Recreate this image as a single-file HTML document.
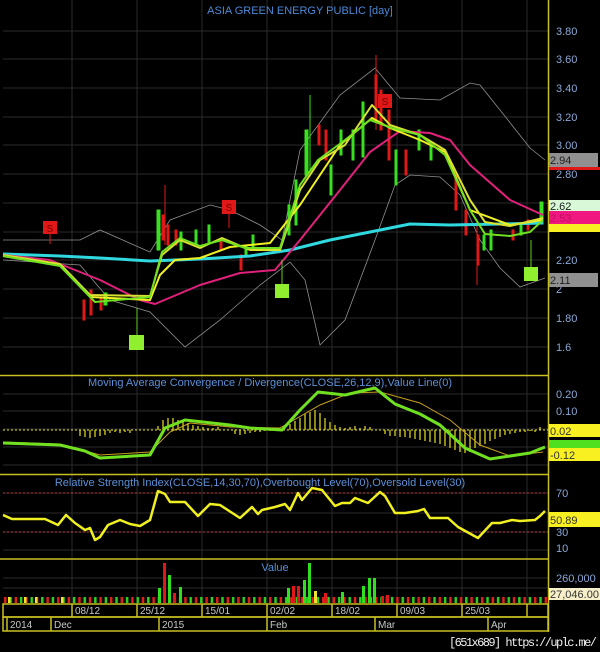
<!DOCTYPE html>
<html><head><meta charset="utf-8"><style>
html,body{margin:0;padding:0;background:#000;width:600px;height:652px;overflow:hidden}
svg{display:block}
text{font-family:"Liberation Sans",sans-serif}
text.wm{font-family:"Liberation Mono",monospace}
</style></head><body>
<svg width="600" height="652" viewBox="0 0 600 652" xmlns="http://www.w3.org/2000/svg">
<defs>
<pattern id="vb" x="3" y="595" width="10.6" height="8" patternUnits="userSpaceOnUse">
<rect x="1" y="2" width="2.5" height="6" fill="#e0201a"/><rect x="6.3" y="2" width="2.5" height="6" fill="#30d020"/>
</pattern>
</defs>
<rect width="600" height="652" fill="#000"/>
<g stroke="#2a2a2a" stroke-width="1">
<path d="M3 31H548M3 59H548M3 88H548M3 117H548M3 145H548M3 174H548M3 203H548M3 232H548M3 260H548M3 289H548M3 318H548M3 347H548"/>
<path d="M3 394H548M3 411H548M3 429H548M3 447H548M3 465H548M3 493H548M3 513H548M3 532H548M3 550H548M3 578H548M3 588H548"/>
<path d="M72 0V603M137 0V603M202 0V603M267 0V603M332 0V603M397 0V603M462 0V603M527 0V603"/>
</g>
<g stroke="#c8c020" stroke-width="1.5" fill="none">
<path d="M548.5 0V632"/>
<path d="M0 375.5H548M0 474.5H548M0 559H548"/>
<rect x="3" y="604" width="545" height="13"/>
<rect x="3" y="617" width="545" height="14"/>
<path d="M72 604V617M137 604V617M202 604V617M267 604V617M332 604V617M397 604V617M462 604V617M527 604V617"/>
<path d="M7 617V631M51 617V631M159 617V631M267 617V631M375 617V631M488 617V631"/>
</g>
<text x="300" y="14" fill="#4a8ad8" font-size="11" text-anchor="middle">ASIA GREEN ENERGY PUBLIC [day]</text>
<g fill="#8aa8d8" font-size="11">
<text x="556" y="35">3.80</text><text x="556" y="63">3.60</text><text x="556" y="92">3.40</text>
<text x="556" y="121">3.20</text><text x="556" y="149">3.00</text><text x="556" y="178">2.80</text>
<text x="556" y="264">2.20</text><text x="556" y="293">2</text><text x="556" y="322">1.80</text><text x="556" y="351">1.6</text>
<text x="556" y="398">0.20</text><text x="556" y="415">0.10</text>
<text x="556" y="497">70</text><text x="556" y="536">30</text><text x="556" y="552">10</text>
<text x="556" y="582">260,000</text>
</g>
<g fill="none" stroke="#909090" stroke-width="0.8">
<polyline points="3,240 80,240 100,230 150,252 170,220 210,205 230,210 260,225 282,240 300,150 340,95 375,68 400,98 440,100 470,83 480,85 500,110 530,148 545,160"/>
<polyline points="3,260 80,265 110,300 150,312 185,347 220,320 260,285 290,262 305,280 320,345 345,320 375,240 395,185 410,175 440,177 460,195 480,240 500,268 520,287 545,278"/>
</g>
<g stroke-width="1">
<g fill="#e01818" stroke="#e01818">
<rect x="83" y="300" width="2" height="20"/><rect x="90" y="290" width="2" height="25"/><rect x="100" y="298" width="2" height="12"/>
<rect x="162" y="215" width="3" height="25"/><rect x="167" y="225" width="2" height="20"/><rect x="175" y="230" width="2" height="15"/><line x1="165" y1="185" x2="165" y2="245"/>
<rect x="220" y="240" width="2" height="10"/><rect x="240" y="255" width="2" height="15"/><rect x="318" y="125" width="2" height="20"/><rect x="325" y="130" width="2" height="30"/>
<rect x="375" y="75" width="2" height="45"/><rect x="380" y="90" width="2" height="40"/><rect x="388" y="110" width="2" height="50"/><line x1="376" y1="55" x2="376" y2="130"/>
<rect x="405" y="150" width="2" height="25"/><rect x="455" y="175" width="2" height="35"/><rect x="465" y="210" width="2" height="25"/><rect x="477" y="235" width="2" height="30"/><line x1="477" y1="220" x2="477" y2="285"/>
<rect x="512" y="230" width="2" height="10"/><rect x="527" y="220" width="2" height="10"/>
</g>
<g fill="#38e020" stroke="#38e020">
<rect x="104" y="293" width="3" height="12"/><rect x="157" y="210" width="3" height="40"/><rect x="180" y="232" width="2" height="18"/><rect x="195" y="230" width="2" height="14"/>
<rect x="208" y="225" width="2" height="18"/><rect x="245" y="245" width="2" height="12"/><rect x="252" y="235" width="2" height="15"/>
<rect x="288" y="205" width="2" height="30"/><rect x="295" y="180" width="2" height="45"/><rect x="305" y="130" width="3" height="45"/><line x1="310" y1="95" x2="310" y2="170"/>
<rect x="330" y="165" width="2" height="30"/><rect x="340" y="130" width="2" height="25"/><rect x="352" y="130" width="2" height="30"/><rect x="362" y="102" width="2" height="55"/>
<rect x="395" y="150" width="2" height="35"/><rect x="418" y="130" width="2" height="20"/><rect x="430" y="145" width="2" height="15"/>
<rect x="483" y="235" width="2" height="15"/><rect x="490" y="230" width="2" height="20"/><rect x="520" y="225" width="2" height="10"/><rect x="540" y="202" width="3" height="22"/>
</g>
</g>
<g fill="none" stroke-linejoin="round">
<polyline stroke="#30d8e0" stroke-width="3" points="3,254 60,256 100,258 150,261 200,259 250,256 290,250 330,240 370,232 410,224 450,225 500,224 543,223"/>
<polyline stroke="#e0207a" stroke-width="2" points="3,255 50,260 100,280 140,300 155,304 200,285 240,273 275,270 300,240 340,190 370,152 400,131 430,133 450,140 470,165 510,200 543,215"/>
<polyline stroke="#f0f020" stroke-width="2" points="3,256 60,265 90,297 150,300 160,275 175,260 200,258 230,247 270,243 300,205 340,145 372,118 390,128 420,140 445,152 470,210 510,225 543,220"/>
<polyline stroke="#d8e030" stroke-width="2" points="3,255 60,264 90,295 150,296 162,255 180,240 200,248 222,238 250,250 280,250 300,190 320,160 345,145 372,105 390,125 420,135 445,150 470,200 485,222 510,226 543,218"/>
<polyline stroke="#70e020" stroke-width="2" points="3,256 60,266 95,302 150,297 162,252 180,238 200,246 222,240 245,248 280,248 300,185 318,160 345,140 370,120 392,128 420,135 445,155 470,210 485,234 510,236 530,232 543,220"/>
</g>
<g>
<line x1="50" y1="232" x2="50" y2="244" stroke="#e01818"/><rect x="43" y="221" width="14" height="13" fill="#e01818"/><text x="50" y="232" fill="#700" font-size="10" text-anchor="middle">S</text>
<line x1="229" y1="210" x2="229" y2="228" stroke="#e01818"/><rect x="222" y="200" width="14" height="14" fill="#e01818"/><text x="229" y="211" fill="#700" font-size="10" text-anchor="middle">S</text>
<rect x="378" y="94" width="14" height="14" fill="#e01818"/><text x="385" y="105" fill="#700" font-size="10" text-anchor="middle">S</text>
<line x1="137" y1="308" x2="137" y2="336" stroke="#60d020"/><rect x="129" y="335" width="15" height="15" fill="#90f030"/>
<line x1="282" y1="260" x2="282" y2="286" stroke="#60d020"/><rect x="275" y="284" width="14" height="14" fill="#90f030"/>
<line x1="531" y1="240" x2="531" y2="268" stroke="#60d020"/><rect x="524" y="267" width="14" height="14" fill="#90f030"/>
</g>
<rect x="549" y="153" width="49" height="14" fill="#909090"/><rect x="549" y="167" width="51" height="3" fill="#e01818"/>
<text x="550" y="164" fill="#222" font-size="11">2.94</text>
<rect x="549" y="200" width="51" height="11" fill="#d8f8d8"/><text x="550" y="210" fill="#222" font-size="11">2.62</text>
<rect x="549" y="211" width="51" height="13" fill="#f01880"/><text x="550" y="222" fill="#c01060" font-size="11">2.53</text>
<rect x="549" y="224" width="51" height="8" fill="#f8f020"/>
<rect x="549" y="273" width="49" height="14" fill="#909090"/><text x="550" y="284" fill="#222" font-size="11">2.11</text>
<text x="270" y="386" fill="#5a90d8" font-size="11" text-anchor="middle">Moving Average Convergence / Divergence(CLOSE,26,12,9),Value Line(0)</text>
<line x1="3" y1="430" x2="548" y2="430" stroke="#e8e020" stroke-dasharray="2,2"/>
<g stroke="#e8e020" stroke-width="1.2">
<path d="M80 430V436M85 430V437M90 430V438M95 430V437M100 430V436M105 430V435M110 430V433M115 430V432M120 430V433M125 430V432M130 430V433"/>
<path d="M158 430V426M163 430V420M168 430V418M173 430V418M178 430V420M183 430V421M188 430V423M193 430V425M198 430V426M203 430V427M208 430V428M213 430V428M218 430V427"/>
<path d="M235 430V434M240 430V435M245 430V434M250 430V433M255 430V432M260 430V432M265 430V431M270 430V431"/>
<path d="M290 430V424M295 430V421M300 430V418M305 430V414M310 430V412M315 430V410M320 430V413M325 430V418M330 430V422M335 430V425M340 430V427M345 430V428M350 430V427M355 430V426M360 430V428M365 430V426M370 430V427"/>
<path d="M385 430V434M390 430V436M395 430V436M400 430V437M405 430V437M410 430V438M415 430V439M420 430V440M425 430V441M430 430V442M435 430V443M440 430V444M445 430V446M450 430V448M455 430V450M460 430V452M465 430V453M470 430V452M475 430V448M480 430V446M485 430V444M490 430V441M495 430V439M500 430V437M505 430V435M510 430V434M515 430V433M520 430V432M525 430V432M530 430V431M535 430V432M540 430V427"/>
</g>
<polyline fill="none" stroke="#c8a020" stroke-width="1" points="3,442 60,444 100,455 150,452 170,432 190,423 230,427 280,428 320,405 350,393 380,392 420,403 450,420 480,445 510,456 543,452"/>
<polyline fill="none" stroke="#70e020" stroke-width="3" stroke-linejoin="round" points="3,443 60,445 85,451 100,458 150,455 165,428 185,420 230,425 250,428 282,430 300,410 318,392 345,395 375,388 395,404 420,414 440,425 465,448 490,459 530,453 545,447"/>
<rect x="549" y="424" width="51" height="13" fill="#f8f020"/><text x="550" y="435" fill="#333" font-size="11">0.02</text>
<rect x="549" y="440" width="51" height="8" fill="#50e020"/>
<rect x="549" y="448" width="51" height="13" fill="#f8f020"/><text x="550" y="459" fill="#333" font-size="11">-0.12</text>
<text x="260" y="486" fill="#5a90d8" font-size="11" text-anchor="middle">Relative Strength Index(CLOSE,14,30,70),Overbought Level(70),Oversold Level(30)</text>
<g stroke="#c04040" stroke-dasharray="2,2"><line x1="3" y1="493" x2="548" y2="493"/><line x1="3" y1="532" x2="548" y2="532"/></g>
<polyline fill="none" stroke="#f0f020" stroke-width="2.5" stroke-linejoin="round" points="3,515 12,519 45,519 58,525 66,515 75,523 85,530 90,528 95,540 100,537 108,525 120,520 130,524 140,526 150,520 158,491 165,494 170,502 185,502 198,516 210,504 220,505 240,518 252,507 258,514 262,510 275,507 285,504 290,510 298,493 302,500 312,488 322,490 335,506 342,503 350,503 355,498 368,503 380,492 385,496 395,513 405,513 418,511 424,509 430,518 448,518 458,527 478,538 492,523 500,523 512,520 520,521 535,520 540,516 545,511"/>
<rect x="549" y="512" width="51" height="15" fill="#f8f020"/><text x="550" y="524" fill="#333" font-size="11">50.89</text>
<text x="275" y="571" fill="#5a90d8" font-size="11" text-anchor="middle">Value</text>
<rect x="3" y="597" width="545" height="6" fill="url(#vb)"/>
<g>
<rect x="8" y="597" width="2.5" height="6" fill="#f0e030"/><rect x="24" y="597" width="2.5" height="6" fill="#f0e030"/><rect x="35" y="597" width="2.5" height="6" fill="#f0e030"/><rect x="61" y="597" width="2.5" height="6" fill="#f0e030"/>
<rect x="158" y="588" width="3" height="15" fill="#30e020"/><rect x="163" y="563" width="3" height="40" fill="#e01818"/><rect x="168" y="575" width="3" height="28" fill="#30e020"/><rect x="173" y="593" width="3" height="10" fill="#e01818"/><rect x="179" y="587" width="3" height="16" fill="#30e020"/>
<rect x="287" y="588" width="3" height="15" fill="#30e020"/><rect x="292" y="586" width="3" height="17" fill="#e01818"/><rect x="297" y="586" width="3" height="17" fill="#e01818"/><rect x="303" y="580" width="3" height="23" fill="#30e020"/><rect x="308" y="563" width="3" height="40" fill="#30e020"/><rect x="314" y="591" width="3" height="12" fill="#f0e030"/>
<rect x="324" y="593" width="3" height="10" fill="#e01818"/><rect x="341" y="592" width="3" height="11" fill="#30e020"/><rect x="362" y="586" width="3" height="17" fill="#30e020"/><rect x="368" y="578" width="3" height="25" fill="#30e020"/><rect x="373" y="578" width="3" height="25" fill="#30e020"/><rect x="381" y="596" width="3" height="7" fill="#e01818"/><rect x="386" y="595" width="3" height="8" fill="#e01818"/>
</g>
<rect x="549" y="588" width="51" height="12" fill="#f8f0c8"/><text x="550" y="598" fill="#333" font-size="11">27,046.00</text>
<g fill="#c8c8c8" font-size="10">
<text x="75" y="614">08/12</text><text x="140" y="614">25/12</text><text x="205" y="614">15/01</text><text x="270" y="614">02/02</text>
<text x="335" y="614">18/02</text><text x="400" y="614">09/03</text><text x="465" y="614">25/03</text>
<text x="10" y="628">2014</text><text x="54" y="628">Dec</text><text x="162" y="628">2015</text><text x="270" y="628">Feb</text><text x="378" y="628">Mar</text><text x="491" y="628">Apr</text>
</g>
<text class="wm" x="597" y="646" fill="#f0f0f0" font-size="12" text-anchor="end" textLength="148">[651x689] https://uplc.me/</text>
</svg>
</body></html>
